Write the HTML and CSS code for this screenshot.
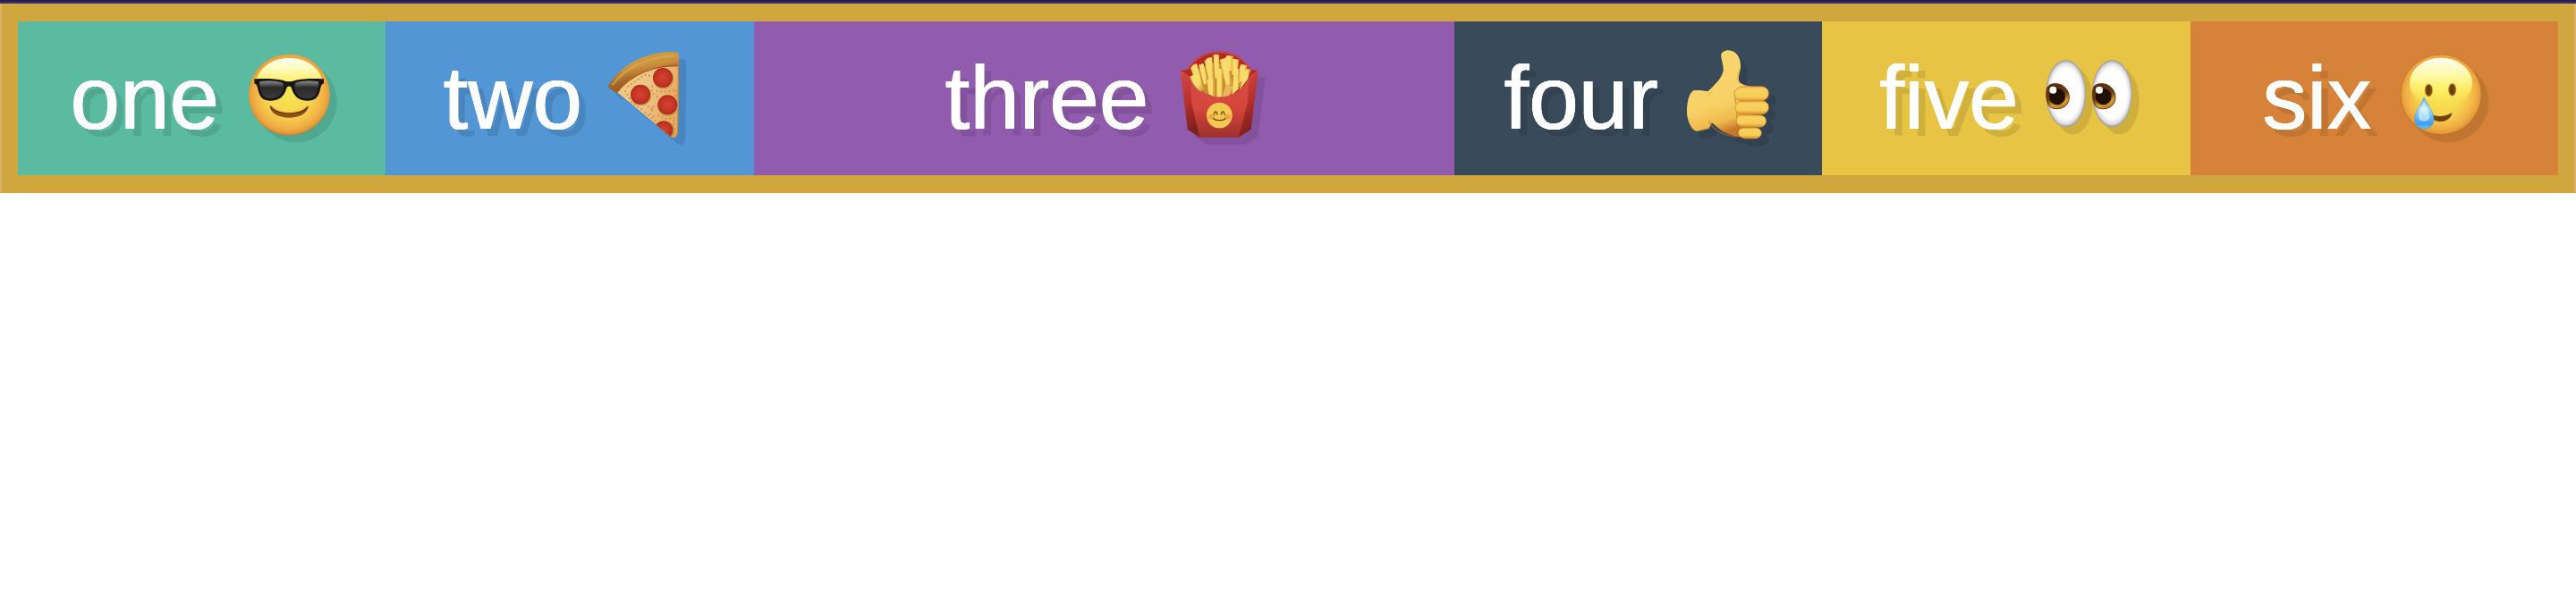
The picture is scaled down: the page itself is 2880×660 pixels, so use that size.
FILE: index.html
```html
<!DOCTYPE html>
<html lang="en">
<head>
<meta charset="utf-8">
<title>Flex boxes</title>
<link rel="stylesheet" href="styles.css">
</head>
<body>
<div class="topbar"></div>
<main class="container">
  <div class="box box1">one <svg class="emoji" viewBox="818 168 300 300">
    <defs>
      <radialGradient id="face" cx=".5" cy=".48" r=".52"><stop offset="0" stop-color="#f8e654"/><stop offset=".55" stop-color="#f7d34e"/><stop offset=".84" stop-color="#f0b044"/><stop offset=".95" stop-color="#e89a39"/><stop offset="1" stop-color="#cf7b2c"/></radialGradient>
      <linearGradient id="shine" x2="0" y2="1"><stop offset="0" stop-color="#fffef0"/><stop offset=".35" stop-color="#fffbb8"/><stop offset=".75" stop-color="#fff36c" stop-opacity=".8"/><stop offset="1" stop-color="#f9e04e" stop-opacity="0"/></linearGradient>
      <linearGradient id="lens" x2="0" y2="1"><stop offset="0" stop-color="#8b8b8b"/><stop offset=".28" stop-color="#444"/><stop offset=".38" stop-color="#292929"/><stop offset="1" stop-color="#3a3a3a"/></linearGradient>
    </defs>
    <circle cx="969" cy="318" r="136" fill="url(#face)"/>
    <path d="M857 275C868 225 914 195 969 195s102 30 113 80c-32 38-194 38-225 0z" fill="url(#shine)"/>
    <path d="M903 357c4-3 8 0 14 5 28 20 76 20 104 0 5-4 9-8 13-5-6 25-31 38-65 38s-60-13-66-38z" fill="#8d5018"/>
    <path d="M907 361c28 25 99 25 124 0" fill="none" stroke="#633109" stroke-width="4"/>
    <path d="M909 357c22 29 99 29 120 0l-10 4c-24 19-76 19-100 0z" fill="#f2bd45"/>
    <path d="M852 265c28-2 70-2 95 4 14 6 29 6 43 0 25-6 67-6 95-4v15c-7 2-9 7-11 15-5 27-14 43-41 43-34 0-49-17-56-42-3-9-14-9-17 0-7 25-22 42-56 42-27 0-36-16-41-43-2-8-4-13-11-15z" fill="#161616"/>
    <path d="M870 274c23-4 63-3 77 5 9 8 0 31-11 43-14 11-46 11-55-2-7-9-14-37-11-46z" fill="url(#lens)"/>
    <path d="M1067 274c-23-4-63-3-77 5-9 8 0 31 11 43 14 11 46 11 55-2 7-9 14-37 11-46z" fill="url(#lens)"/>
  </svg></div>
  <div class="box box2">two <svg class="emoji" viewBox="777 168 300 300">
    <defs>
      <linearGradient id="crust" x1="0" y1="0" x2=".35" y2="1"><stop offset="0" stop-color="#d4a148"/><stop offset=".45" stop-color="#cc943d"/><stop offset=".7" stop-color="#a7692a"/><stop offset="1" stop-color="#995421"/></linearGradient>
      <linearGradient id="cheese" x2="1" y2=".3"><stop offset="0" stop-color="#f2c979"/><stop offset=".5" stop-color="#edc788"/><stop offset="1" stop-color="#e5ad60"/></linearGradient>
      <radialGradient id="pep"><stop offset="0" stop-color="#d34433"/><stop offset=".8" stop-color="#c23222"/><stop offset="1" stop-color="#a92719"/></radialGradient>
      <clipPath id="slice"><path d="M806 306C855 245 930 214 1017 216L1014 440Q1010 473 988 458Z"/></clipPath>
    </defs>
    <path d="M806 306C855 245 930 214 1017 216L1014 440Q1010 473 988 458Z" fill="url(#cheese)"/>
    <g clip-path="url(#slice)">
      <path d="M806 306C855 245 930 214 1017 216" fill="none" stroke="#b64b25" stroke-width="14"/>
      <path d="M1016 216L1014 440Q1010 466 998 462" fill="none" stroke="#c17c36" stroke-width="5"/>
      <g fill="#c89b51"><circle cx="890" cy="320" r="35"/><circle cx="965" cy="264" r="35"/><circle cx="980" cy="356" r="34"/><circle cx="969" cy="440" r="35"/></g>
      <g fill="url(#pep)"><circle cx="888" cy="317" r="33"/><circle cx="963" cy="261" r="33"/><circle cx="979" cy="352" r="33"/><circle cx="966" cy="437" r="31"/></g>
      <g fill="none" stroke="#d77a42" stroke-width="4" stroke-linecap="round" stroke-dasharray="3 11"><path d="M846 291l55-40 24 4M836 305l12 17 10 23 21 13 18 12M928 288l-2 22 19 16M942 306l30 2 34-6M934 357l-14 25 22 15M947 385l24 13 30-2M1008 305l-4 20M903 377l34 29M1000 402l3 42M914 355l14 11"/></g>
    </g>
    <path d="M780 288C824 217 900 177 987 174c19-1 29 0 30 8v30q0 6-10 6C934 218 858 250 813 307c-2 5-6 5-12 1l-17-12q-4-4-4-8z" fill="url(#crust)"/>
    <path d="M793 286C840 226 907 192 1002 187" fill="none" stroke="#dcac5c" stroke-width="7" opacity=".65"/>
  </svg></div>
  <div class="box box3">three <svg class="emoji" viewBox="847 168 300 300">
    <defs>
      <linearGradient id="carton" x2="0" y2="1"><stop offset="0" stop-color="#d64d47"/><stop offset=".55" stop-color="#d6463c"/><stop offset="1" stop-color="#9d302c"/></linearGradient>
      <linearGradient id="side" x2=".25" y2="1"><stop offset="0" stop-color="#d74945"/><stop offset=".55" stop-color="#b5302c"/><stop offset="1" stop-color="#7c1f1e"/></linearGradient>
      <linearGradient id="fry"><stop offset="0" stop-color="#f3cf58"/><stop offset=".35" stop-color="#f9dd70"/><stop offset=".7" stop-color="#f7d767"/><stop offset=".8" stop-color="#e0ae43"/><stop offset="1" stop-color="#dba73c"/></linearGradient>
    </defs>
    <path d="M870 238l22-5c26-36 55-60 108-60s82 24 108 60l23 5-50 90H910z" fill="#b52a22"/>
    <path d="M894 233c26-34 55-57 106-57s80 23 106 57" fill="none" stroke="#cf4741" stroke-width="4"/>
    <path d="M906 258l10-18 36-18 20-14 30 6 40 0 20 16 28 18-10 30-30 35-50 15-50-15z" fill="#c98a30"/>
    <g fill="url(#fry)">
      <path d="M951 205l10-10 15-4 9 78-18 6z"/>
      <path d="M980 185l8-3 11 2 6 75-18 5z"/>
      <path d="M1020 195l7-9 21 2-6 50-20 2z"/>
      <path d="M1044 199l5-2 18 3-5 45-19 8z"/>
      <path d="M931 218l16-6 17 66-15 6z"/>
      <path d="M904 229l7-10 14-6 25 92-20-14z"/>
      <path d="M1068 228l5-13 22 5-14 50-16 8z"/>
      <path d="M1085 243l8-13 14 3-12 34-28 37z"/>
      <path d="M901 258l14-7 29 56-9 3c-17-14-28-30-34-52z"/>
      <path d="M1002 200l20-6 23 88-21 9z"/>
      <path d="M959 269l15-6 10 3 2 60-21-10z"/>
      <path d="M992 235l12-5 9 3-2 93-19 1z"/>
      <path d="M1050 235l6-5 14 3-5 66-22 18z"/>
      <path d="M1020 292l8-8 18 5-12 32-23 5z" fill="#eab65c"/>
    </g>
    <path d="M870 238l33 23c13 37 48 65 98 65s87-28 99-65l31-23-25 197-40 26H934l-39-26z" fill="url(#carton)"/>
    <path d="M870 238l34 25 3 80 27 117-40-26z" fill="url(#side)"/>
    <path d="M1131 238l-32 25-3 80-30 117 41-26z" fill="url(#side)"/>
    <path d="M870 238l33 23c13 37 48 65 98 65s87-28 99-65l31-23" fill="none" stroke="#d8655e" stroke-width="2"/>
    <circle cx="1001" cy="387" r="43" fill="#f3ca4f"/>
    <g fill="#ee8d3b" opacity=".6"><ellipse cx="975" cy="392" rx="11" ry="9"/><ellipse cx="1028" cy="392" rx="11" ry="9"/></g>
    <path d="M983 384c1-12 9-12 11 0M1007 384c1-12 9-12 11 0M981 398c9 8 31 8 40 0" fill="none" stroke="#7b4b16" stroke-width="4" stroke-linecap="round"/>
  </svg></div>
  <div class="box box4">four <svg class="emoji" viewBox="815 168 300 300">
    <defs>
      <linearGradient id="hand" x1=".1" x2=".35" y2="1"><stop offset="0" stop-color="#f8d66f"/><stop offset=".65" stop-color="#f8d267"/><stop offset=".87" stop-color="#f0bb4c"/><stop offset="1" stop-color="#c7782c"/></linearGradient>
      <linearGradient id="finger" x2="0" y2="1"><stop offset="0" stop-color="#ecb33f"/><stop offset=".2" stop-color="#f8d262"/><stop offset=".7" stop-color="#f7cb56"/><stop offset="1" stop-color="#d68e2d"/></linearGradient>
    </defs>
    <path d="M849 304c12-2 31 1 49 2 21-21 48-45 51-70 1-24-10-41-7-54 5-14 29-18 44-7 18 13 25 37 19 62-5 22-8 36 3 43 10 6 20 8 34 10l11 127-16 41c-31 7-74-3-103-27l-23-19-10 19-38 9c-16 4-33-27-36-58-1-31 5-69 22-78z" fill="url(#hand)"/>
    <path d="M1002 237c-5 22-9 36 4 43M895 322l20-20M864 439l34-8" fill="none" stroke="#d89b35" stroke-width="3" opacity=".65"/>
    <path d="M900 407c15 26 45 48 96 53M987 305c3 22 1 34 7 51l3 96" fill="none" stroke="#b46d28" stroke-width="4" opacity=".6"/>
    <g fill="url(#finger)" stroke="#c98029" stroke-width="2"><path d="M1018 290l60 0c31 3 30 43 1 49l-60 2c-43-1-44-48-1-51z"/><path d="M1008 340l75-1c24 4 24 38 0 44l-74 1c-25-3-28-38-1-44z"/><path d="M1012 385l62 1c25 5 25 36 0 41l-61-1c-26-4-27-37-1-41z"/><path d="M1014 429l44-1c25 3 25 33 0 37h-34c-30-3-32-31-10-36z"/></g>
  </svg></div>
  <div class="box box5">five <svg class="emoji" viewBox="764 168 300 300">
    <defs>
      <radialGradient id="eye"><stop offset="0" stop-color="#fff"/><stop offset=".75" stop-color="#fff"/><stop offset=".9" stop-color="#dedee1"/><stop offset="1" stop-color="#98959a"/></radialGradient>
      <linearGradient id="iris" x1=".25" y1="0" x2=".65" y2="1"><stop offset="0" stop-color="#542b0d"/><stop offset=".5" stop-color="#6e3b10"/><stop offset=".78" stop-color="#d69d2c"/><stop offset="1" stop-color="#b77c24"/></linearGradient>
      <g id="eyeball"><ellipse cx="838" cy="314" rx="67" ry="113" fill="url(#eye)"/><path d="M777 291c10-13 35-13 51-3 25 17 28 50 8 68-15 12-40 12-52 2-13-15-15-50-7-67z" fill="url(#iris)" stroke="#663611" stroke-width="3"/><ellipse cx="809" cy="324" rx="27" ry="28" fill="#211002"/><circle cx="795" cy="302" r="12" fill="#fff"/></g>
    </defs>
    <use href="#eyeball"/><use href="#eyeball" x="155"/>
  </svg></div>
  <div class="box box6">six <svg class="emoji" viewBox="718 168 300 300">
    <defs>
      <linearGradient id="tear" x2="0" y2="1"><stop offset="0" stop-color="#65b8f2"/><stop offset=".35" stop-color="#b9e5fa"/><stop offset=".6" stop-color="#68bdf8"/><stop offset=".85" stop-color="#3e9eed"/><stop offset="1" stop-color="#68caf5"/></linearGradient>
      <linearGradient id="glow" x2="0" y2="1"><stop offset="0" stop-color="#fffef2"/><stop offset=".4" stop-color="#fffaa0" stop-opacity=".95"/><stop offset=".65" stop-color="#fff567" stop-opacity=".7"/><stop offset="1" stop-color="#f6df4d" stop-opacity="0"/></linearGradient>
    </defs>
    <circle cx="868" cy="318" r="135" fill="url(#face)" stroke="#b86d25" stroke-width="2"/>
    <ellipse cx="868" cy="279" rx="105" ry="85" fill="url(#glow)"/>
    <g fill="#855018" stroke="#dfb644" stroke-width="2"><ellipse cx="827" cy="303" rx="13" ry="21"/><ellipse cx="906" cy="301" rx="13" ry="21"/></g>
    <g fill="#6c3b0c"><ellipse cx="827" cy="303" rx="6" ry="15"/><ellipse cx="906" cy="301" rx="6" ry="15"/></g>
    <path d="M829 382c28 13 54 9 76-4-1 17-18 30-39 30-20 0-34-11-37-26z" fill="#71400f"/>
    <path d="M811 328c9 18 33 48 33 71 0 22-14 33-32 33s-32-12-32-33c0-24 25-53 31-71z" fill="url(#tear)" stroke="#3e99dc" stroke-width="2"/>
    <path d="M811 342c6 20 18 35 19 51 0 18-37 18-37 0 0-17 13-33 18-51z" fill="#fff" opacity=".5"/>
  </svg></div>
</main>
</body>
</html>
```
FILE: styles.css
```css
body {
  margin: 0;
  background: #fff;
  font-family: "Liberation Sans", Arial, sans-serif;
}

.topbar {
  box-sizing: border-box;
  height: 4px;
  background: #281c4d;
  border-bottom: 2px solid #3d316e;
}

.container {
  box-sizing: border-box;
  display: flex;
  height: 212px;
  padding: 20px 18px;
  border: solid #d8b262;
  border-width: 0 2px;
  background: #d0a63f;
}

.box {
  flex: 1 1 0;
  color: #fff;
  font-size: 100px;
  line-height: 170px;
  text-align: center;
  white-space: nowrap;
  font-variant-ligatures: none;
  text-shadow: 0.5px 0 0 #fff, -0.5px 0 0 #fff, 0 0.4px 0 #fff, 0 -0.4px 0 #fff,
    8px 8px 0 rgba(0, 0, 0, 0.1);
}

.box1 { background: #5abba0; }
.box2 { background: #5296d5; }
.box3 { flex: 0 0 783px; background: #925cae; }
.box4 { background: #394a5b; }
.box5 { background: #e8c444; }
.box6 { background: #d68339; }

.emoji {
  width: 100px;
  height: 100px;
  vertical-align: -12px;
  overflow: visible;
  filter: drop-shadow(8px 8px 0 rgba(0, 0, 0, 0.1));
}
```
